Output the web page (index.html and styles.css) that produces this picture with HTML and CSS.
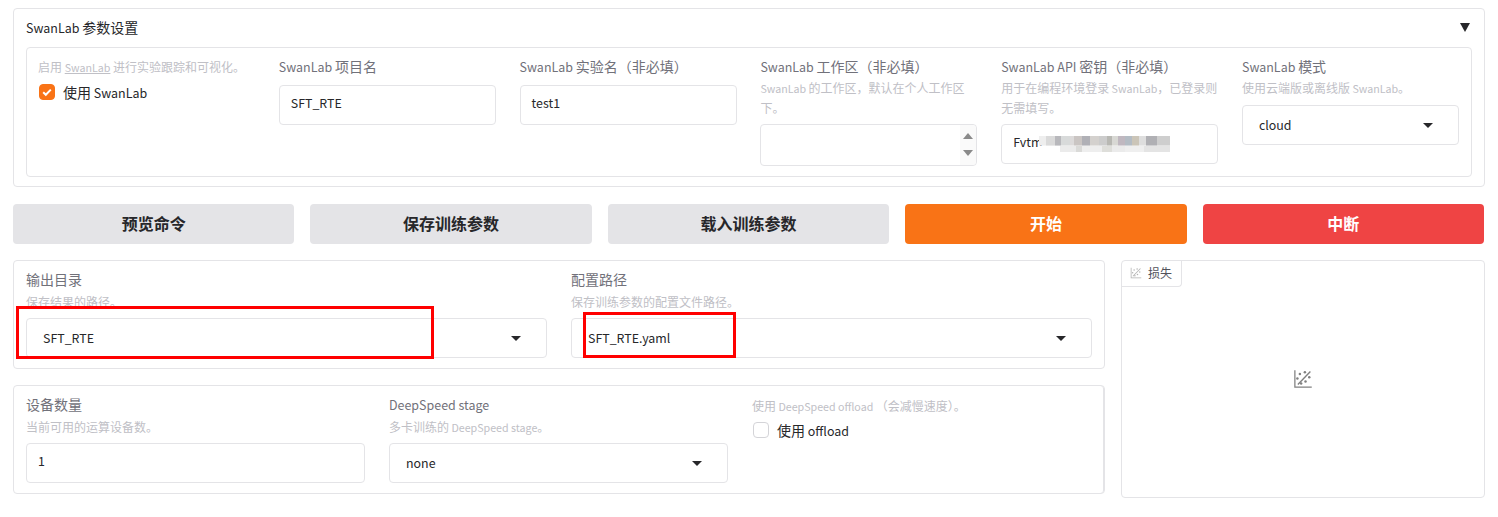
FILE: index.html
```html
<!DOCTYPE html>
<html lang="zh">
<head>
<meta charset="utf-8">
<title>SwanLab</title>
<link rel="stylesheet" href="styles.css">
</head>
<body>
<main class="page">
  <section class="accordion">
    <div class="acc-head"><span><span class="lt">SwanLab </span>参数设置</span><span class="acc-arrow"></span></div>
    <div class="acc-body">
      <div class="field intro">
        <p class="desc">启用 <u class="lt">SwanLab</u> 进行实验跟踪和可视化。</p>
        <label class="check"><span class="box on"><svg viewBox="0 0 16 16" width="16" height="16"><path d="M4.2 8.3l2.6 2.5 5-5.2" fill="none" stroke="#fff" stroke-width="2"/></svg></span><span>使用<span class="lt"> SwanLab</span></span></label>
      </div>
      <div class="field"><p class="label"><span class="lt">SwanLab </span>项目名</p><div class="input">SFT_RTE</div></div>
      <div class="field"><p class="label"><span class="lt">SwanLab </span>实验名（非必填）</p><div class="input">test1</div></div>
      <div class="field">
        <p class="label"><span class="lt">SwanLab </span>工作区（非必填）</p>
        <p class="desc wrap"><span class="lt">SwanLab </span>的工作区，默认在个人工作区下。</p>
        <div class="input textarea"><span class="spin"><i class="up"></i><i class="down"></i></span></div>
      </div>
      <div class="field">
        <p class="label"><span class="lt">SwanLab API </span>密钥（非必填）</p>
        <p class="desc wrap">用于在编程环境登录<span class="lt"> SwanLab</span>，已登录则无需填写。</p>
        <div class="input">Fvtm<span class="mosaic"></span></div>
      </div>
      <div class="field">
        <p class="label"><span class="lt">SwanLab </span>模式</p>
        <p class="desc">使用云端版或离线版<span class="lt"> SwanLab</span>。</p>
        <div class="input select">cloud<i class="caret"></i></div>
      </div>
    </div>
  </section>

  <div class="actions">
    <button class="btn">预览命令</button>
    <button class="btn">保存训练参数</button>
    <button class="btn">载入训练参数</button>
    <button class="btn primary">开始</button>
    <button class="btn stop">中断</button>
  </div>

  <div class="lower">
    <div class="left">
      <section class="card two">
        <div class="field"><p class="label">输出目录</p><p class="desc">保存结果的路径。</p><div class="input select">SFT_RTE<i class="caret"></i></div></div>
        <div class="field"><p class="label">配置路径</p><p class="desc">保存训练参数的配置文件路径。</p><div class="input select">SFT_RTE.yaml<i class="caret"></i></div></div>
      </section>
      <section class="card three">
        <div class="field"><p class="label">设备数量</p><p class="desc">当前可用的运算设备数。</p><div class="input">1</div></div>
        <div class="field"><p class="label"><span class="lt">DeepSpeed stage</span></p><p class="desc">多卡训练的<span class="lt"> DeepSpeed stage</span>。</p><div class="input select">none<i class="caret"></i></div></div>
        <div class="field offload">
          <p class="desc">使用<span class="lt"> DeepSpeed offload </span>（会减慢速度）。</p>
          <label class="check"><span class="box"></span><span>使用<span class="lt"> offload</span></span></label>
        </div>
      </section>
    </div>
    <section class="plot">
      <div class="plot-tab">
        <svg class="scatter small" viewBox="0 0 32 32"><use href="#scatter"/></svg>损失
      </div>
      <div class="plot-empty">
        <svg class="scatter" viewBox="0 0 32 32">
          <g id="scatter" fill="#808080">
            <path d="M2 2h2v26h26v2H2z"/>
            <path d="M7 24L27 3l1.6 1.6L8.6 25.6z"/>
            <circle cx="11" cy="8" r="2"/><circle cx="19" cy="5" r="2"/><circle cx="7" cy="15" r="2"/>
            <circle cx="26" cy="13" r="2"/><circle cx="20" cy="20" r="2"/><circle cx="13" cy="23" r="2"/>
          </g>
        </svg>
      </div>
    </section>
  </div>
</main>
<div class="mark mark-a"></div>
<div class="mark mark-b"></div>
</body>
</html>
```
FILE: styles.css
```css
* { box-sizing: border-box; }
html, body { margin: 0; padding: 0; background: #fff; }
body {
  width: 1498px;
  height: 517px;
  overflow: hidden;
  position: relative;
  font-family: "Noto Sans CJK SC", "Noto Sans", sans-serif;
  font-size: 14px;
  color: #27272a;
}
p { margin: 0; }
.lt { font-size: .89em; line-height: 1; }
.page { padding: 8px 13px 0; width: 1498px; }
.page > * { width: 1472px; }

.accordion {
  height: 179px;
  border: 1px solid #e4e4e7;
  border-radius: 4px;
  padding: 0 12px;
}
.acc-head {
  height: 38px;
  display: flex;
  justify-content: space-between;
  align-items: center;
  padding: 0 2px 2px 0;
  color: #27272a;
  font-size: 14px;
}
.acc-arrow {
  width: 0; height: 0;
  border-left: 5px solid transparent;
  border-right: 5px solid transparent;
  border-top: 9px solid #27272a;
}
.acc-body {
  height: 130px;
  border: 1px solid #e4e4e7;
  border-radius: 4px;
  padding: 6px 11px;
  display: grid;
  grid-template-columns: repeat(6, 217px);
  column-gap: 23.8px;
}

.field { min-width: 0; display: flex; flex-direction: column; }
.label { color: #71717a; font-size: 14px; line-height: 24px; height: 24px; }
.desc { color: #c0c0c6; font-size: 12px; line-height: 20px; white-space: nowrap; }
.desc.wrap { white-space: normal; height: 40px; }
.acc-body .field > .label + .input { margin-top: 7px; }
.acc-body .desc.wrap + .input { margin-top: 6px; }
.acc-body .desc + .select { margin-top: 7px; }
.intro .desc { line-height: 26px; height: 26px; }

.input {
  height: 40px;
  border: 1px solid #e4e4e7;
  border-radius: 4px;
  padding: 0 11px 4px;
  display: flex;
  align-items: center;
  color: #27272a;
  font-size: 12.4px;
  background: #fff;
  position: relative;
}
.input.textarea { height: 42px; padding: 0; justify-content: flex-end; align-items: stretch; }
.spin { width: 16px; background: #fafafa; display: flex; flex-direction: column; justify-content: space-between; align-items: center; padding: 8px 0 9px; border-radius: 0 4px 4px 0; }
.spin i { width: 0; height: 0; border-left: 5px solid transparent; border-right: 5px solid transparent; }
.spin .up { border-bottom: 6px solid #8a8a8a; }
.spin .down { border-top: 6px solid #8a8a8a; }

.select { padding: 0 25px 0 16px; justify-content: space-between; }
.caret {
  width: 0; height: 0;
  border-left: 5px solid transparent;
  border-right: 5px solid transparent;
  border-top: 5px solid #27272a;
}

.mosaic {
  width: 131px;
  height: 16px;
  margin: 4px 0 0 -3px;
  background-repeat: no-repeat;
  background-position: 0 0, 0 100%;
  background-size: 100% 60%, 100% 40%;
  background-image:
    linear-gradient(90deg, #eeeeee 0 5%, #dadada 5% 12%, #b8b8bc 12% 17%, #d8dada 17% 24%, #dcdada 24% 27%, #cac5c3 27% 33%, #b0b0b6 33% 39%, #d4d1ce 39% 46%, #cccccc 46% 52%, #b8b8b3 52% 56%, #d8d8d4 56% 60%, #c0b8c0 60% 66%, #b4bcc4 66% 71%, #cbc5b8 71% 76%, #dedede 76% 82%, #b0b0b4 82% 90%, #cecece 90% 100%),
    linear-gradient(90deg, #fff 0 16%, #ebebeb 16% 28%, #dadad8 28% 33%, #eeeeee 33% 48%, #dedeDA 48% 56%, #ebebeb 56% 66%, #efefef 66% 80%, #e4e4e4 80% 100%);
}

.check { display: flex; align-items: center; font-size: 14px; color: #27272a; margin-top: 0; height: 24px; }
.box {
  width: 16px; height: 16px;
  border: 1px solid #d4d4d8;
  border-radius: 4px;
  background: #fff;
  display: block;
  flex: none;
  margin: 0 8px 0 1px;
}
.box.on { background: #f97316; border-color: #f97316; }
.box.on svg { display: block; margin: -1px; }

.actions {
  margin-top: 17px;
  display: grid;
  grid-template-columns: repeat(5, 1fr);
  column-gap: 16px;
  padding-right: 1px;
}
.btn {
  height: 40px;
  border: 0;
  border-radius: 4px;
  padding: 0 0 2px;
  background: #e4e4e7;
  color: #27272a;
  font: 700 16px "Noto Sans CJK SC", sans-serif;
}
.btn.primary { background: #f97316; color: #fff; }
.btn.stop { background: #ef4444; color: #fff; }

.lower { margin-top: 16px; display: flex; gap: 16px; }
.left { width: 1092px; display: flex; flex-direction: column; gap: 16px; }
.card {
  height: 109px;
  border: 1px solid #e4e4e7;
  border-radius: 4px;
  padding: 7px 12px;
  display: grid;
  column-gap: 24px;
}
.two { grid-template-columns: 521px 521px; }
.three { grid-template-columns: repeat(3, 339px); box-shadow: inset -1px 0 0 #e4e4e7; }
.card .label { line-height: 22px; height: 24px; }
.card .desc { line-height: 18px; height: 18px; margin: 1px 0 7px; }
.card .offload .desc { line-height: 24px; height: 24px; margin: 1px 0 0; }

.plot {
  flex: 1;
  max-width: 364px;
  height: 238px;
  border: 1px solid #e4e4e7;
  border-radius: 4px;
  display: flex;
  flex-direction: column;
}
.plot-tab {
  width: 60px;
  height: 26px;
  border-right: 1px solid #e4e4e7;
  border-bottom: 1px solid #e4e4e7;
  border-radius: 0 0 4px 0;
  display: flex;
  align-items: center;
  gap: 6px;
  padding: 0 0 2px 8px;
  font-size: 12px;
  color: #52525b;
}
.plot-empty { flex: 1; display: flex; align-items: center; justify-content: center; padding-bottom: 26px; }
.scatter { width: 20px; height: 20px; display: block; }
.scatter.small { width: 12px; height: 12px; opacity: .6; }

.mark { position: absolute; border: 3px solid #ff0000; }
.mark-a { left: 16px; top: 306px; width: 418px; height: 53px; }
.mark-b { left: 583px; top: 312px; width: 153px; height: 46px; }
```
